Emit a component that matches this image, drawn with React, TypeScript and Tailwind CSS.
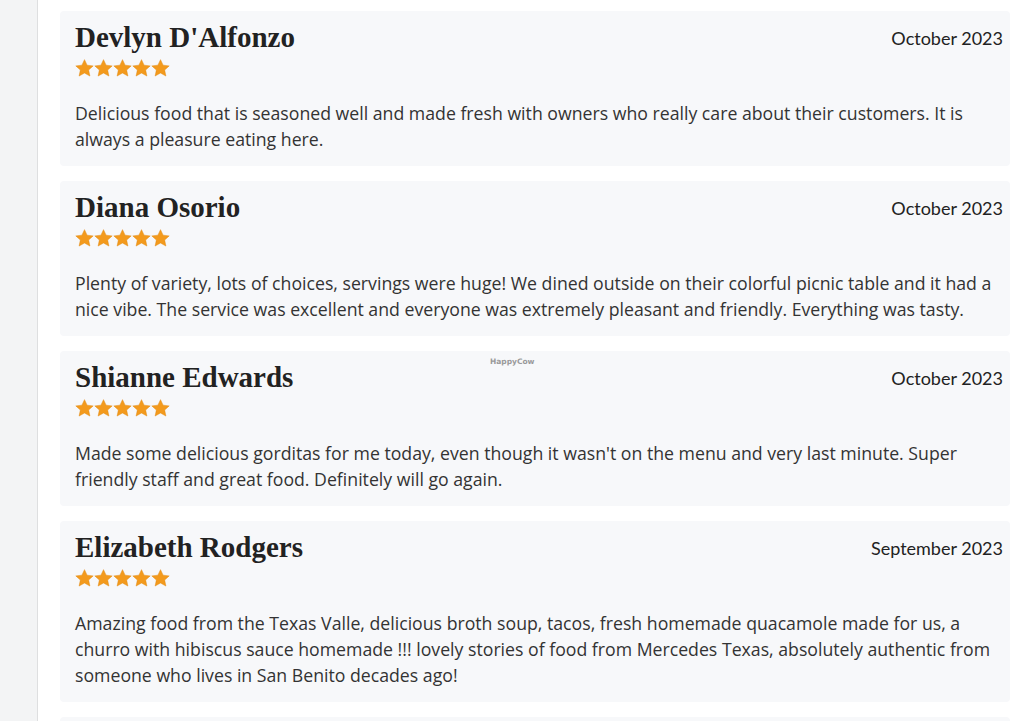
import React from 'react';

const REVIEWS = [
  {
    name: "Devlyn D'Alfonzo",
    date: 'October 2023',
    text: 'Delicious food that is seasoned well and made fresh with owners who really care about their customers. It is always a pleasure eating here.',
  },
  {
    name: 'Diana Osorio',
    date: 'October 2023',
    text: 'Plenty of variety, lots of choices, servings were huge! We dined outside on their colorful picnic table and it had a nice vibe. The service was excellent and everyone was extremely pleasant and friendly. Everything was tasty.',
  },
  {
    name: 'Shianne Edwards',
    date: 'October 2023',
    text: "Made some delicious gorditas for me today, even though it wasn't on the menu and very last minute. Super friendly staff and great food. Definitely will go again.",
  },
  {
    name: 'Elizabeth Rodgers',
    date: 'September 2023',
    text: 'Amazing food from the Texas Valle, delicious broth soup, tacos, fresh homemade quacamole made for us, a churro with hibiscus sauce homemade !!! lovely stories of food from Mercedes Texas, absolutely authentic from someone who lives in San Benito decades ago!',
  },
];

function Star() {
  return (
    <svg width="19" height="18" viewBox="0 0 24 23" className="block">
      <path
        d="M12 0.8l3.3 7.1 7.8 0.9-5.8 5.3 1.6 7.7L12 17.9l-6.9 3.9 1.6-7.7L0.9 8.8l7.8-0.9z"
        fill="#f39a1d"
        stroke="#e08a10"
        strokeWidth="0.6"
      />
    </svg>
  );
}

function ReviewCard({ name, date, text }: { name: string; date: string; text: string }) {
  return (
    <div className="rounded-[4px] bg-[#f7f8fa] px-[15px] pt-[10px] pb-[14px]">
      <div className="flex items-start justify-between">
        <div>
          <h3 className="font-['Liberation_Serif',serif] text-[29px] font-bold leading-[32px] text-[#222]">
            {name}
          </h3>
          <div className="mt-[6px] flex">
            {[0, 1, 2, 3, 4].map((i) => (
              <Star key={i} />
            ))}
          </div>
        </div>
        <div className="mt-[6px] mr-[-8px] font-['Lato',sans-serif] text-[18px] leading-[22px] text-[#222]">
          {date}
        </div>
      </div>
      <p className="mt-[23px] font-['Open_Sans',sans-serif] text-[17.7px] leading-[26px] text-[#333]">
        {text}
      </p>
    </div>
  );
}

export default function App() {
  return (
    <div className="flex min-h-[721px] w-full bg-white">
      <div className="w-[38px] shrink-0 border-r border-[#dedfe0] bg-[#f3f4f5]" />
      <div className="relative flex flex-1 flex-col gap-[15px] pl-[22px] pr-[14px] pt-[11px]">
        {REVIEWS.map((r) => (
          <ReviewCard key={r.name} {...r} />
        ))}
        <div className="h-[20px] rounded-[4px] bg-[#f7f8fa]" />
        <span className="absolute left-[452px] top-[356px] font-['DejaVu_Sans',sans-serif] text-[7.5px] font-bold text-[#9a9a9a]">
          HappyCow
        </span>
      </div>
    </div>
  );
}
